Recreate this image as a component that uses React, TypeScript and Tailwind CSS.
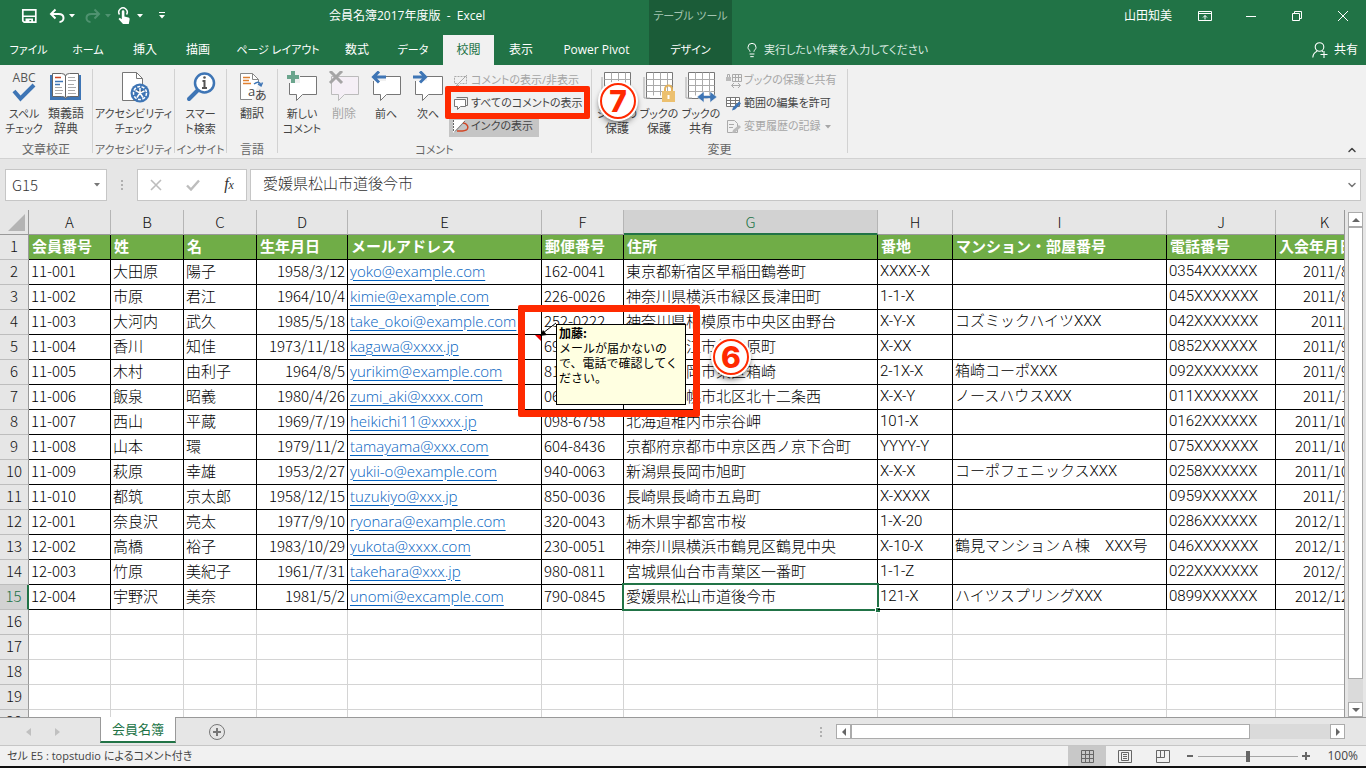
import type { ReactNode } from "react";
import { ChevronDown, ChevronUp, Lightbulb } from "lucide-react";

interface Member {
  no: string;
  last: string;
  first: string;
  birth: string;
  mail: string;
  zip: string;
  address: string;
  block: string;
  building: string;
  tel: string;
  joined: string;
}

const toMember = (r: string[]): Member => ({
  no: r[0],
  last: r[1],
  first: r[2],
  birth: r[3],
  mail: r[4],
  zip: r[5],
  address: r[6],
  block: r[7],
  building: r[8],
  tel: r[9],
  joined: r[10],
});

const members: Member[] = [
  ["11-001", "大田原", "陽子", "1958/3/12", "yoko@example.com", "162-0041", "東京都新宿区早稲田鶴巻町", "XXXX-X", "", "0354XXXXXX", "2011/8/10"],
  ["11-002", "市原", "君江", "1964/10/4", "kimie@example.com", "226-0026", "神奈川県横浜市緑区長津田町", "1-1-X", "", "045XXXXXXX", "2011/8/21"],
  ["11-003", "大河内", "武久", "1985/5/18", "take_okoi@example.com", "252-0222", "神奈川県相模原市中央区由野台", "X-Y-X", "コズミックハイツXXX", "042XXXXXXX", "2011/9/3"],
  ["11-004", "香川", "知佳", "1973/11/18", "kagawa@xxxx.jp", "690-0887", "島根県松江市外中原町", "X-XX", "", "0852XXXXXX", "2011/9/12"],
  ["11-005", "木村", "由利子", "1964/8/5", "yurikim@example.com", "812-0053", "福岡県福岡市東区箱崎", "2-1X-X", "箱崎コーポXXX", "092XXXXXXX", "2011/9/25"],
  ["11-006", "飯泉", "昭義", "1980/4/26", "zumi_aki@xxxx.com", "060-0812", "北海道札幌市北区北十二条西", "X-X-Y", "ノースハウスXXX", "011XXXXXXX", "2011/10/2"],
  ["11-007", "西山", "平蔵", "1969/7/19", "heikichi11@xxxx.jp", "098-6758", "北海道稚内市宗谷岬", "101-X", "", "0162XXXXXX", "2011/10/15"],
  ["11-008", "山本", "環", "1979/11/2", "tamayama@xxx.com", "604-8436", "京都府京都市中京区西ノ京下合町", "YYYY-Y", "", "075XXXXXXX", "2011/10/18"],
  ["11-009", "萩原", "幸雄", "1953/2/27", "yukii-o@example.com", "940-0063", "新潟県長岡市旭町", "X-X-X", "コーポフェニックスXXX", "0258XXXXXX", "2011/10/30"],
  ["11-010", "都筑", "京太郎", "1958/12/15", "tuzukiyo@xxx.jp", "850-0036", "長崎県長崎市五島町", "X-XXXX", "", "0959XXXXXX", "2011/11/6"],
  ["12-001", "奈良沢", "亮太", "1977/9/10", "ryonara@example.com", "320-0043", "栃木県宇都宮市桜", "1-X-20", "", "0286XXXXXX", "2012/11/10"],
  ["12-002", "高橋", "裕子", "1983/10/29", "yukota@xxxx.com", "230-0051", "神奈川県横浜市鶴見区鶴見中央", "X-10-X", "鶴見マンションＡ棟　XXX号", "046XXXXXXX", "2012/11/24"],
  ["12-003", "竹原", "美紀子", "1961/7/31", "takehara@xxx.jp", "980-0811", "宮城県仙台市青葉区一番町", "1-1-Z", "", "022XXXXXXX", "2012/12/1"],
  ["12-004", "宇野沢", "美奈", "1981/5/2", "unomi@excample.com", "790-0845", "愛媛県松山市道後今市", "121-X", "ハイツスプリングXXX", "0899XXXXXX", "2012/12/15"],
].map(toMember);

const wideLatin = "font-[Roboto,'Noto_Sans_CJK_JP',sans-serif]";

const columns: { letter: string; title: string; key: keyof Member; width: string; cell?: string }[] = [
  { letter: "A", title: "会員番号", key: "no", width: "w-[82px]" },
  { letter: "B", title: "姓", key: "last", width: "w-[73px]" },
  { letter: "C", title: "名", key: "first", width: "w-[73px]" },
  { letter: "D", title: "生年月日", key: "birth", width: "w-[91px]", cell: "text-right" },
  { letter: "E", title: "メールアドレス", key: "mail", width: "w-[194px]" },
  { letter: "F", title: "郵便番号", key: "zip", width: "w-[82px]" },
  { letter: "G", title: "住所", key: "address", width: "w-[254px]" },
  { letter: "H", title: "番地", key: "block", width: "w-[75px]", cell: wideLatin },
  { letter: "I", title: "マンション・部屋番号", key: "building", width: "w-[214px]", cell: wideLatin },
  { letter: "J", title: "電話番号", key: "tel", width: "w-[109px]", cell: wideLatin },
  { letter: "K", title: "入会年月日", key: "joined", width: "w-[98px]", cell: "text-right" },
];

const emptyRows = [16, 17, 18, 19, 20];

const tabs = [
  { label: "ファイル", width: "w-[57px]" },
  { label: "ホーム", width: "w-[62px]" },
  { label: "挿入", width: "w-[52px]" },
  { label: "描画", width: "w-[54px]" },
  { label: "ページ レイアウト", width: "w-[106px]" },
  { label: "数式", width: "w-[52px]" },
  { label: "データ", width: "w-[60px]" },
  { label: "校閲", width: "w-[51px]", active: true },
  { label: "表示", width: "w-[54px]" },
  { label: "Power Pivot", width: "w-[97px]" },
];

// labels with kana are set one size smaller so they stay as narrow as the UI needs
const labelSize = (text: string) => (/[ぁ-ヶ]/.test(text) ? "text-[11px]" : "text-[12px]");

function Caret({ className = "" }: { className?: string }) {
  return (
    <svg viewBox="0 0 6 4" className={`h-1 w-1.5 shrink-0 ${className}`} fill="currentColor">
      <path d="M0 0h6L3 3.5z" />
    </svg>
  );
}

/* ---------- title bar ---------- */

function QuickAccess() {
  return (
    <div className="flex items-center text-white">
      <button type="button" aria-label="上書き保存" className="ml-[21px]">
        <svg viewBox="0 0 16 16" className="h-4 w-4">
          <path d="M1.8 1.8h13v12.4H3.2l-1.4-1.4z" fill="none" stroke="currentColor" strokeWidth="1.7" />
          <path d="M2 7.6h12.500v1.400H2zM4.500 10.400h7.500v4h-1.800v-2.400h-1.800v2.400H4.500z" fill="currentColor" />
        </svg>
      </button>
      <button type="button" aria-label="元に戻す" className="ml-3 flex items-center gap-1">
        <svg viewBox="0 0 16 16" className="h-4 w-4" fill="none" stroke="currentColor" strokeWidth="2">
          <path d="M6.500 1.500L2 6l4.500 4.500M2.500 6h7c3 0 5 1.600 5 4s-1.800 4-4 4" />
        </svg>
        <Caret />
      </button>
      <button type="button" aria-label="やり直し" className="ml-2.5 flex items-center gap-1 text-[#4f9270]">
        <svg viewBox="0 0 16 16" className="h-4 w-4" fill="none" stroke="currentColor" strokeWidth="2">
          <path d="M9.500 1.500L14 6l-4.500 4.500M13.500 6h-7c-3 0-5 1.600-5 4s1.800 4 4 4" />
        </svg>
        <Caret />
      </button>
      <button type="button" aria-label="タッチ/マウス モードの切り替え" className="ml-1.5 flex items-center gap-1.5">
        <svg viewBox="0 0 14 18" className="h-[18px] w-3.5">
          <path d="M2.500 7.500A4.200 4.200 0 1 1 9.500 7.500" fill="none" stroke="currentColor" strokeWidth="1.5" />
          <path d="M4.800 4.500a1.300 1.300 0 0 1 2.600 0v5l4 1c1 .3 1.400 1 1.200 2l-.8 4.500H6L1.500 12l1.300-1.200 2 1.400z" fill="currentColor" />
        </svg>
        <Caret />
      </button>
      <button type="button" aria-label="クイック アクセス ツール バーのユーザー設定" className="ml-4 flex flex-col items-center gap-0.5">
        <span className="h-px w-1.5 bg-white" />
        <Caret />
      </button>
    </div>
  );
}

function TitleBar() {
  return (
    <header className="flex h-[65px] shrink-0 bg-[#217346] text-[12px] text-white">
      <div className="flex w-[649px] shrink-0 flex-col">
        <div className="flex h-[35px] items-center pb-1">
          <div className="w-[329px] shrink-0">
            <QuickAccess />
          </div>
          <h1 className="whitespace-pre">会員名簿2017年度版  -  Excel</h1>
        </div>
        <nav className="flex h-[30px]">
          {tabs.map((tab) => (
            <button
              key={tab.label}
              type="button"
              className={`${tab.width} ${labelSize(tab.label)} shrink-0 whitespace-nowrap ${tab.active ? "bg-[#f1f1f1] text-[#217346]" : ""}`}
            >
              {tab.label}
            </button>
          ))}
        </nav>
      </div>
      <div className="flex w-[83px] shrink-0 flex-col bg-[#1b5c38] text-center text-[11px]">
        <div className="h-[35px] leading-[31px] whitespace-nowrap text-[#a3c4b0]">テーブル ツール</div>
        <button type="button" className="h-[30px]">デザイン</button>
      </div>
      <div className="flex min-w-0 flex-1 flex-col">
        <div className="flex h-[35px] items-center justify-end pb-1">
          <span className="mr-[26px]">山田知美</span>
          <button type="button" aria-label="リボンの表示オプション" className="mr-[34px]">
            <svg viewBox="0 0 14 12" className="h-3 w-3.5" fill="none" stroke="currentColor">
              <path d="M.5 1.500h13v9H.5zM.5 3.500h13M7 9.500v-4M5 7.500l2-2 2 2" />
            </svg>
          </button>
          <button type="button" aria-label="最小化" className="mr-[36px]">
            <svg viewBox="0 0 10 10" className="h-2.5 w-2.5" stroke="currentColor">
              <path d="M0 5.500h10" />
            </svg>
          </button>
          <button type="button" aria-label="元に戻す (縮小)" className="mr-[36px]">
            <svg viewBox="0 0 10 10" className="h-2.5 w-2.5" fill="none" stroke="currentColor">
              <path d="M.5 2.500h7v7h-7zM2.500 2.500v-2h7v7h-2" />
            </svg>
          </button>
          <button type="button" aria-label="閉じる" className="mr-[18px]">
            <svg viewBox="0 0 10 10" className="h-2.5 w-2.5" stroke="currentColor">
              <path d="M0 0l10 10M10 0L0 10" />
            </svg>
          </button>
        </div>
        <div className="flex h-[30px] items-center">
          <label className="flex min-w-0 flex-1 items-center gap-1 pl-3">
            <Lightbulb className="h-4 w-4 shrink-0" strokeWidth={1.5} />
            <input
              type="text"
              aria-label="操作アシスト"
              placeholder="実行したい作業を入力してください"
              className="w-[220px] bg-transparent text-[11px] outline-none placeholder:text-[#dcebe2]"
            />
          </label>
          <button type="button" className="mr-2 flex items-center gap-1.5">
            <svg viewBox="0 0 16 16" className="h-4 w-4" fill="none" stroke="currentColor" strokeWidth="1.1">
              <circle cx="7.500" cy="5" r="4.300" />
              <path d="M.8 15.500c.2-3.500 1.700-5 4.200-6.200M10 9.300l1 .6M12 9v7M8.500 12.500h7" />
            </svg>
            共有
          </button>
        </div>
      </div>
    </header>
  );
}

/* ---------- ribbon icons ---------- */

const big = "h-8 w-8";

function SpellIcon() {
  return (
    <svg viewBox="0 0 32 32" className={`${big} overflow-visible`}>
      <text x="16" y="11" textAnchor="middle" fontSize="12" fill="#555">ABC</text>
      <path d="M6 20l6.500 7.500L26 14" fill="none" stroke="#3e75b5" strokeWidth="4" />
    </svg>
  );
}

function ThesaurusIcon() {
  return (
    <svg viewBox="0 0 32 32" className={big}>
      <path d="M0 4h31v25H0z" fill="#3e75b5" />
      <path d="M2.500 2.500h9q4 0 4 3 0-3 4-3h9v23h-9q-4 0-4 2 0-2-4-2h-9z" fill="#fff" stroke="#666" />
      <path d="M15.500 5v21" stroke="#666" />
      <path d="M5 6.500h6" stroke="#d24726" strokeWidth="1.500" />
      <path d="M5 10.500h8M5 13.500h5" stroke="#3e75b5" strokeWidth="1.300" />
      <path d="M5 16.500h7M5 19.500h8M5 22.500h7M18 6.500h7M18 9.500h8M18 13.500h6M18 16.500h8M18 19.500h7M18 22.500h8" stroke="#aaa" />
    </svg>
  );
}

function AccessibilityIcon() {
  return (
    <svg viewBox="0 0 32 32" className={big}>
      <path d="M4.500 1.500h14l6 6v22h-20z" fill="#fff" stroke="#777" />
      <path d="M18.500 1.500v6h6" fill="none" stroke="#777" />
      <circle cx="22" cy="22" r="9.500" fill="#3e75b5" />
      <circle cx="22" cy="22" r="6.500" fill="none" stroke="#fff" strokeWidth="1.500" strokeDasharray="3 1.500" />
      <path d="M22 17v5M17.500 19.500L22 22l4.500-2M22 22l-3 4.500M22 22l3 4.500" stroke="#fff" strokeWidth="1.500" />
    </svg>
  );
}

function SmartLookupIcon() {
  return (
    <svg viewBox="0 0 32 32" className={big}>
      <path d="M4 28l9-9" stroke="#3e75b5" strokeWidth="4" strokeLinecap="round" />
      <circle cx="19.500" cy="12" r="9.500" fill="#fff" stroke="#3e75b5" strokeWidth="2.500" />
      <path d="M17.500 10h2v6.500M17 17h5" fill="none" stroke="#555" strokeWidth="2" />
      <circle cx="19.500" cy="6.500" r="1.300" fill="#555" />
    </svg>
  );
}

function TranslateIcon() {
  return (
    <svg viewBox="0 0 32 32" className={big}>
      <path d="M16 28.500H4.500v-26h12l6 6v4" fill="#fff" stroke="#888" />
      <path d="M16.500 2.500v6h6" fill="none" stroke="#888" />
      <path d="M7 6.500h7M7 9.500h6M7 12.500h8" stroke="#e08030" strokeWidth="1.300" />
      <path d="M18 13q5-4 7 1M22 13l3 2 1.500-3.500" fill="none" stroke="#3e75b5" strokeWidth="1.500" />
      <text x="12" y="25" fontSize="13" fill="#444">a</text>
      <text x="19" y="29" fontSize="12" fill="#444">あ</text>
    </svg>
  );
}

function BubbleIcon({ mark }: { mark: "new" | "delete" | "prev" | "next" }) {
  const dim = mark === "delete";
  return (
    <svg viewBox="0 0 32 32" className={big}>
      <path
        d="M3.500 5.500h27v18h-14l-6 6v-6h-7z"
        fill={dim ? "#f5eff6" : "#fff"}
        stroke={dim ? "#bbb" : "#777"}
      />
      {mark === "new" && (
        <>
          <path d="M0 3h14v9H0z" fill="#f1f1f1" />
          <path d="M7 0v12M1 6h12" stroke="#6ba58d" strokeWidth="4" />
        </>
      )}
      {mark === "delete" && <path d="M2 0l12 12M14 0L2 12" stroke="#a5a5a5" strokeWidth="3" />}
      {mark === "prev" && (
        <>
          <path d="M0 3h16v7H0z" fill="#f1f1f1" />
          <path d="M16 6H4M9 .500L3.500 6 9 11.500" fill="none" stroke="#3e75b5" strokeWidth="3" />
        </>
      )}
      {mark === "next" && (
        <>
          <path d="M0 3h15v7H0z" fill="#f1f1f1" />
          <path d="M1 6h12M8 .500L13.500 6 8 11.500" fill="none" stroke="#3e75b5" strokeWidth="3" />
        </>
      )}
    </svg>
  );
}

function SheetGridIcon({ mark }: { mark: "lock" | "share" }) {
  return (
    <svg viewBox="0 0 32 32" className={big}>
      <path d="M3.500 1.500h26v23h-5l-2 3h-19z" fill="#fff" stroke="#777" />
      <path d="M1 6v21h6M3.500 8.500h26M3.500 14.500h26M3.500 20.500h26M10.500 1.500v23M17.500 1.500v23M24.500 1.500v23" fill="none" stroke="#aaa" />
      {mark === "lock" && (
        <>
          <path d="M22 21v-3a3.500 3.500 0 0 1 7 0v3" fill="none" stroke="#e3b25c" strokeWidth="2" />
          <path d="M19 20h13v11H19z" fill="#ecc06f" />
          <path d="M25.500 24v4" stroke="#fff" strokeWidth="2" />
        </>
      )}
      {mark === "share" && (
        <path d="M12 26l7-5.500v4h6v-4l7 5.500-7 5.500v-4h-6v4z" fill="#3e75b5" stroke="#f1f1f1" strokeWidth=".6" />
      )}
    </svg>
  );
}

const small = "h-4 w-4 shrink-0";

function ToggleCommentIcon() {
  return (
    <svg viewBox="0 0 16 16" className={small} fill="none" stroke="#aaa">
      <path d="M1.500 3.500h12v7h-6l-3 3v-3h-3z" strokeDasharray="2 1" />
      <path d="M3 13L14 2" />
    </svg>
  );
}

function AllCommentsIcon() {
  return (
    <svg viewBox="0 0 16 16" className={small} fill="#fff" stroke="#777">
      <path d="M3.500 1.500h11v8h-2" fill="none" />
      <path d="M1.500 3.500h11v7h-5l-3 3v-3h-3z" />
    </svg>
  );
}

function InkIcon() {
  return (
    <svg viewBox="0 0 16 16" className={small} fill="none">
      <path d="M0 14V1h12z" fill="#fff" />
      <path d="M.5 1v12" stroke="#666" strokeDasharray="2 1" />
      <path d="M2 12.500L12 2" stroke="#777" />
      <path d="M10 4c4 0 6 4 4 6.500-2 2-6 1.500-10 1.500" stroke="#d24726" strokeWidth="1.500" />
    </svg>
  );
}

function ProtectShareIcon() {
  return (
    <svg viewBox="0 0 16 16" className={small} fill="none" stroke="#aaa">
      <path d="M6.500 1.500h9v7h-9zM6.500 4.500h9M9.500 1.500v7M12.500 1.500v7" />
      <path d="M0 4h5v4H0z" fill="#bbb" stroke="none" />
      <path d="M1.500 4V1.500h2V4M6 12.500h8M8 10l-2.500 2.500L8 15M12 10l2.500 2.500L12 15" />
    </svg>
  );
}

function EditRangeIcon() {
  return (
    <svg viewBox="0 0 16 16" className={small} fill="none">
      <path d="M.5 1.500h13v9H.5zM.5 4.500h13M.5 7.500h13M4.500 1.500v9M9.500 1.500v9" fill="#fff" stroke="#777" />
      <path d="M6 14.500l1-3L13 5.500l2 2-6 6z" fill="#3e75b5" />
    </svg>
  );
}

function TrackIcon() {
  return (
    <svg viewBox="0 0 16 16" className={small} fill="none" stroke="#aaa">
      <path d="M1.500 1.500h7l3 3v9h-10zM3 5.500h5M3 8.500h4" />
      <path d="M6 14l1-3 6-5 2 2-6 5.500z" fill="#bbb" stroke="none" />
    </svg>
  );
}

/* ---------- ribbon ---------- */

function RibbonGroup({ label, width, children }: { label: string; width: string; children: ReactNode }) {
  return (
    <section className={`${width} flex h-[84px] shrink-0 flex-col border-r border-[#d2d2d2]`}>
      <div className="flex h-[72px]">{children}</div>
      <div className={`${labelSize(label)} h-3 text-center leading-[18px] whitespace-nowrap text-[#666]`}>{label}</div>
    </section>
  );
}

function BigButton({ icon, lines, width = "w-[42px]", dim }: { icon: ReactNode; lines: string[]; width?: string; dim?: boolean }) {
  return (
    <button
      type="button"
      disabled={dim}
      className={`${width} flex shrink-0 flex-col items-center pt-0.5 leading-[15px] whitespace-nowrap ${dim ? "text-[#a6a6a6]" : ""}`}
    >
      <span className="mb-[3px]">{icon}</span>
      {lines.map((line) => (
        <span key={line} className={labelSize(line)}>
          {line}
        </span>
      ))}
    </button>
  );
}

function SmallButton({ icon, label, dim, on, caret }: { icon: ReactNode; label: string; dim?: boolean; on?: boolean; caret?: boolean }) {
  return (
    <div className="flex h-[23px] items-center">
      <button
        type="button"
        disabled={dim}
        className={`flex h-5 items-center gap-0.5 pl-1 text-[11px] whitespace-nowrap ${dim ? "text-[#a6a6a6]" : ""} ${on ? "bg-[#c5c5c5] pr-1.5" : "pr-1"}`}
      >
        {icon}
        {label}
        {caret && <Caret className="ml-0.5" />}
      </button>
    </div>
  );
}

function StepBadge({ children, place }: { children: string; place: string }) {
  return (
    <div className={`${place} absolute z-20 flex h-10 w-10 items-center justify-center rounded-full bg-white shadow-md shadow-black/40`}>
      <div className="flex h-9 w-9 items-center justify-center rounded-full border-2 border-[#ff2a00] font-[Inter,sans-serif] text-[30px] leading-[30px] font-extrabold text-[#ff2a00]">
        {children}
      </div>
    </div>
  );
}

function Ribbon() {
  return (
    <div className="relative flex h-[94px] shrink-0 border-b border-[#d2d2d2] bg-[#f1f1f1] pt-1 text-[12px] text-[#444]">
      <RibbonGroup label="文章校正" width="w-[93px]">
        <div className="flex pl-[3px]">
          <BigButton icon={<SpellIcon />} lines={["スペル", "チェック"]} />
          <BigButton icon={<ThesaurusIcon />} lines={["類義語", "辞典"]} />
        </div>
      </RibbonGroup>
      <RibbonGroup label="アクセシビリティ" width="w-[82px]">
        <BigButton icon={<AccessibilityIcon />} lines={["アクセシビリティ", "チェック"]} width="w-full" />
      </RibbonGroup>
      <RibbonGroup label="インサイト" width="w-[52px]">
        <BigButton icon={<SmartLookupIcon />} lines={["スマー", "ト検索"]} width="w-full" />
      </RibbonGroup>
      <RibbonGroup label="言語" width="w-[51px]">
        <BigButton icon={<TranslateIcon />} lines={["翻訳"]} width="w-full" />
      </RibbonGroup>
      <RibbonGroup label="コメント" width="w-[314px]">
        <div className="flex pl-[3px]">
          <BigButton icon={<BubbleIcon mark="new" />} lines={["新しい", "コメント"]} />
          <BigButton icon={<BubbleIcon mark="delete" />} lines={["削除"]} dim />
          <BigButton icon={<BubbleIcon mark="prev" />} lines={["前へ"]} />
          <BigButton icon={<BubbleIcon mark="next" />} lines={["次へ"]} />
        </div>
        <div className="flex flex-col">
          <SmallButton icon={<ToggleCommentIcon />} label="コメントの表示/非表示" dim />
          <SmallButton icon={<AllCommentsIcon />} label="すべてのコメントの表示" />
          <SmallButton icon={<InkIcon />} label="インクの表示" on />
        </div>
      </RibbonGroup>
      <RibbonGroup label="変更" width="w-[256px]">
        <div className="flex pl-1">
          <BigButton icon={<SheetGridIcon mark="lock" />} lines={["シートの", "保護"]} />
          <BigButton icon={<SheetGridIcon mark="lock" />} lines={["ブックの", "保護"]} />
          <BigButton icon={<SheetGridIcon mark="share" />} lines={["ブックの", "共有"]} />
        </div>
        <div className="flex flex-col">
          <SmallButton icon={<ProtectShareIcon />} label="ブックの保護と共有" dim />
          <SmallButton icon={<EditRangeIcon />} label="範囲の編集を許可" />
          <SmallButton icon={<TrackIcon />} label="変更履歴の記録" dim caret />
        </div>
      </RibbonGroup>
      <button type="button" aria-label="リボンを折りたたむ" className="mt-auto mr-2 mb-0.5 ml-auto">
        <ChevronUp className="h-3 w-3" strokeWidth={3} />
      </button>
      <div className="absolute top-[21px] left-[445px] h-[33px] w-[145px] rounded-xs border-6 border-[#ff2a00]" />
      <StepBadge place="top-4 left-[598px]">7</StepBadge>
    </div>
  );
}

/* ---------- formula bar ---------- */

function FormulaBar() {
  return (
    <div className="flex h-[51px] shrink-0 items-center px-[5px] font-light text-[#333]">
      <div className="flex h-8 w-[102px] shrink-0 items-center border border-[#c6c6c6] bg-white pr-1.5">
        <input type="text" aria-label="名前ボックス" defaultValue="G15" className="min-w-0 flex-1 pt-0.5 pl-1.5 text-[15px] outline-none" />
        <Caret className="text-[#777]" />
      </div>
      <div className="flex w-[30px] shrink-0 flex-col items-center gap-0.5">
        <span className="h-0.5 w-0.5 bg-[#b0b0b0]" />
        <span className="h-0.5 w-0.5 bg-[#b0b0b0]" />
        <span className="h-0.5 w-0.5 bg-[#b0b0b0]" />
      </div>
      <div className="flex h-8 w-[110px] shrink-0 items-center justify-around border border-[#c6c6c6] bg-white">
        <button type="button" aria-label="キャンセル">
          <svg viewBox="0 0 12 12" className="h-3 w-3" stroke="#bdbdbd" strokeWidth="1.600">
            <path d="M1 1l10 10M11 1L1 11" />
          </svg>
        </button>
        <button type="button" aria-label="入力">
          <svg viewBox="0 0 14 12" className="h-3 w-3.5" fill="none" stroke="#bdbdbd" strokeWidth="2.400">
            <path d="M1 6.500l4 4L13 1.500" />
          </svg>
        </button>
        <button type="button" aria-label="関数の挿入" className="font-['Liberation_Serif',serif] text-base leading-4 font-normal italic">
          f<span className="text-[12px]">x</span>
        </button>
      </div>
      <div className="ml-[3px] flex h-8 min-w-0 flex-1 items-center border border-[#c6c6c6] bg-white pr-0.5">
        <input type="text" aria-label="数式バー" defaultValue="愛媛県松山市道後今市" className="min-w-0 flex-1 pb-0.5 pl-3 text-[15px] outline-none" />
        <ChevronDown className="h-3 w-3 text-[#777]" strokeWidth={3} />
      </div>
    </div>
  );
}

/* ---------- sheet ---------- */

const rowHead = "border-r border-b border-r-[#999] border-b-[#bdbdbd] bg-[#e6e6e6] text-center font-light text-[#111]";

function SheetTable() {
  return (
    <table className="w-[1374px] table-fixed border-separate border-spacing-0 text-[15px] leading-[22px] font-light whitespace-nowrap text-black">
      <colgroup>
        <col className="w-[29px]" />
        {columns.map((c) => (
          <col key={c.letter} className={c.width} />
        ))}
      </colgroup>
      <thead>
        <tr className="h-[25px]">
          <th className="border-r border-b border-[#999] p-0">
            <svg viewBox="0 0 17 17" className="ml-2 h-[17px] w-[17px]">
              <path d="M17 0v17H0z" fill="#b4b4b4" />
            </svg>
          </th>
          {columns.map((c) => (
            <th
              key={c.letter}
              className={`border-r p-0 font-light ${
                c.letter === "G"
                  ? "border-b-2 border-r-[#b5b5b5] border-b-[#217346] bg-[#d2d2d2] text-[#217346]"
                  : "border-b border-r-[#b5b5b5] border-b-[#999] text-[#111]"
              }`}
            >
              {c.letter}
            </th>
          ))}
        </tr>
      </thead>
      <tbody>
        <tr className="h-[25px] align-top">
          <th className={`${rowHead} p-0`}>1</th>
          {columns.map((c) => (
            <th key={c.letter} className="border-r border-b border-black bg-[#70ad47] py-0 pr-0 pl-[3px] text-left font-bold text-white">
              {c.title}
            </th>
          ))}
        </tr>
        {members.map((m, i) => {
          const row = i + 2;
          return (
            <tr key={m.no} className="h-[25px] align-top">
              <th className={row === 15 ? "border-r-2 border-b border-r-[#217346] border-b-[#bdbdbd] bg-[#d2d2d2] p-0 font-light text-[#217346]" : `${rowHead} p-0`}>
                {row}
              </th>
              {columns.map((c) => (
                <td key={c.letter} className={`relative border-r border-b border-black px-0.5 py-0 ${c.cell ?? ""}`}>
                  {c.key === "mail" ? (
                    <a
                      href={`mailto:${m.mail}`}
                      className="font-['Open_Sans','Noto_Sans_CJK_JP',sans-serif] text-[#0563c1] underline underline-offset-3"
                    >
                      {m.mail}
                    </a>
                  ) : (
                    m[c.key]
                  )}
                  {/* comment marker on E5 */}
                  {c.letter === "E" && row === 5 && (
                    <svg viewBox="0 0 6 6" className="absolute top-0 right-0 h-1.5 w-1.5">
                      <path d="M0 0h6v6z" fill="#e00" />
                    </svg>
                  )}
                  {/* active cell frame */}
                  {c.letter === "G" && row === 15 && (
                    <span className="absolute -inset-0.5 border-2 border-[#217346]">
                      <span className="absolute -right-1 -bottom-1 h-1.5 w-1.5 border border-white bg-[#217346]" />
                    </span>
                  )}
                </td>
              ))}
            </tr>
          );
        })}
        {emptyRows.map((row) => (
          <tr key={row} className="h-[25px] align-top">
            <th className={`${rowHead} p-0`}>{row}</th>
            {columns.map((c) => (
              <td key={c.letter} className="border-r border-b border-[#d4d4d4] p-0" />
            ))}
          </tr>
        ))}
      </tbody>
    </table>
  );
}

function CellComment() {
  return (
    <>
      <svg viewBox="0 0 20 16" className="absolute top-[112px] left-[538px] z-10 h-4 w-5">
        <path d="M18 1L5 11" stroke="#000" />
        <path d="M2 14l3-6 4 5z" fill="#000" />
      </svg>
      <div className="absolute top-[114px] left-[556px] z-10 h-[81px] w-[130px] border border-black bg-[#ffffe1] pl-0.5 text-[12px] leading-[15px] text-black [font-feature-settings:normal]">
        <p className="font-bold">加藤:</p>
        <p>
          メールが届かないの
          <br />
          で、電話で確認してく
          <br />
          ださい。
        </p>
      </div>
      <div className="absolute top-[95px] left-[518px] z-10 h-[112px] w-[182px] rounded-xs border-7 border-[#ff2a00]" />
      <StepBadge place="top-[127px] left-[711px]">6</StepBadge>
    </>
  );
}

function ArrowButton({ label, points }: { label: string; points: string }) {
  return (
    <button type="button" aria-label={label} className="flex h-[15px] w-[15px] shrink-0 items-center justify-center border border-[#ababab] bg-white">
      <svg viewBox="0 0 8 8" className="h-2 w-2" fill="#666">
        <polygon points={points} />
      </svg>
    </button>
  );
}

function Sheet() {
  return (
    <main className="flex min-h-0 flex-1">
      <div className="relative min-w-0 flex-1 overflow-hidden border-r border-[#999] bg-[linear-gradient(#e6e6e6_25px,#fff_25px)] [font-feature-settings:normal]">
        <SheetTable />
        <CellComment />
      </div>
      <div className="flex w-[21px] shrink-0 flex-col items-start pt-0.5 pl-[3px]">
        <ArrowButton label="上へスクロール" points="0,6 4,2 8,6" />
        <div className="flex min-h-0 w-[15px] flex-1 flex-col bg-[#dadada]">
          <div className="h-[452px] shrink border border-[#ababab] bg-white" />
        </div>
        <ArrowButton label="下へスクロール" points="0,2 8,2 4,6" />
      </div>
    </main>
  );
}

function SheetTabs() {
  return (
    <div className="flex h-7 shrink-0 border-t border-[#999] pr-[21px]">
      <div className="flex w-[100px] shrink-0 items-center gap-6 pl-[26px]">
        <svg viewBox="0 0 5 8" className="h-2 w-[5px]" fill="#c0c0c0">
          <path d="M5 0v8L0 4z" />
        </svg>
        <svg viewBox="0 0 5 8" className="h-2 w-[5px]" fill="#c0c0c0">
          <path d="M0 0v8l5-4z" />
        </svg>
      </div>
      <button type="button" className="-mt-px h-[26px] w-[76px] shrink-0 border-x border-b-2 border-x-[#999] border-b-[#217346] bg-white pt-0.5 text-[13px] text-[#217346]">
        会員名簿
      </button>
      <button type="button" aria-label="新しいシート" className="ml-8 shrink-0">
        <svg viewBox="0 0 18 18" className="h-[18px] w-[18px]" fill="none" stroke="#777">
          <circle cx="9" cy="9" r="7.500" />
          <path d="M9 5v8M5 9h8" strokeWidth="2" />
        </svg>
      </button>
      <div className="min-w-0 flex-1" />
      <div className="mr-3.5 flex flex-col justify-center gap-0.5">
        <span className="h-0.5 w-0.5 bg-[#b0b0b0]" />
        <span className="h-0.5 w-0.5 bg-[#b0b0b0]" />
        <span className="h-0.5 w-0.5 bg-[#b0b0b0]" />
      </div>
      <div className="flex w-[509px] shrink-0 items-center">
        <ArrowButton label="左へスクロール" points="6,0 6,8 2,4" />
        <div className="h-[15px] flex-1 bg-[#dadada]">
          <div className="h-full w-[399px] border border-[#ababab] bg-white" />
        </div>
        <ArrowButton label="右へスクロール" points="2,0 2,8 6,4" />
      </div>
    </div>
  );
}

/* ---------- status bar ---------- */

function StatusBar() {
  return (
    <footer className="flex h-[23px] shrink-0 items-center border-t border-b-2 border-t-[#c6c6c6] border-b-[#111] bg-[#f1f1f1] text-[12px] text-[#444]">
      <p className="flex-1 pl-[7px] text-[11px]">セル E5 : topstudio によるコメント付き</p>
      <button type="button" aria-label="標準" className="flex h-full w-[38px] items-center justify-center bg-[#c8c8c8]">
        <svg viewBox="0 0 13 13" className="h-[13px] w-[13px]" fill="none" stroke="#666">
          <path d="M.5.5h12v12H.5zM.5 4.500h12M.5 8.500h12M4.500.5v12M8.500.5v12" />
        </svg>
      </button>
      <button type="button" aria-label="ページ レイアウト" className="flex w-[38px] justify-center">
        <svg viewBox="0 0 14 13" className="h-[13px] w-3.5" fill="none" stroke="#666">
          <path d="M.5.5h13v12H.5zM3.500 2.500h7v8h-7zM5 4.500h4M5 6.500h4M5 8.500h4" />
        </svg>
      </button>
      <button type="button" aria-label="改ページ プレビュー" className="flex w-[38px] justify-center">
        <svg viewBox="0 0 14 13" className="h-[13px] w-3.5" fill="none" stroke="#666">
          <path d="M.5.5h13v12H.5zM4.500.5v7M8.500.5v7h-8" />
        </svg>
      </button>
      <button type="button" aria-label="縮小" className="flex h-4 w-4 items-center justify-center">
        <span className="h-0.5 w-1.5 bg-[#666]" />
      </button>
      <input
        type="range"
        aria-label="ズーム"
        defaultValue={50}
        className="mr-0.5 h-3 w-[100px] appearance-none bg-[linear-gradient(#a6a6a6,#a6a6a6)] bg-[length:100%_1px] bg-center bg-no-repeat [&::-webkit-slider-thumb]:h-[11px] [&::-webkit-slider-thumb]:w-1 [&::-webkit-slider-thumb]:appearance-none [&::-webkit-slider-thumb]:bg-[#666]"
      />
      <button type="button" aria-label="拡大" className="flex h-4 w-3 items-center justify-center">
        <svg viewBox="0 0 8 8" className="h-2 w-2" stroke="#666" strokeWidth="2">
          <path d="M4 0v8M0 4h8" />
        </svg>
      </button>
      <span className="mr-2 w-[46px] text-right">100%</span>
    </footer>
  );
}

export default function App() {
  return (
    <div className="flex h-screen flex-col overflow-hidden bg-[#e6e6e6] font-['Open_Sans','Noto_Sans_CJK_JP',sans-serif] [font-feature-settings:'palt']">
      <TitleBar />
      <Ribbon />
      <div className="contents font-['Noto_Sans_CJK_JP',sans-serif]">
        <FormulaBar />
        <Sheet />
      </div>
      <SheetTabs />
      <StatusBar />
    </div>
  );
}
